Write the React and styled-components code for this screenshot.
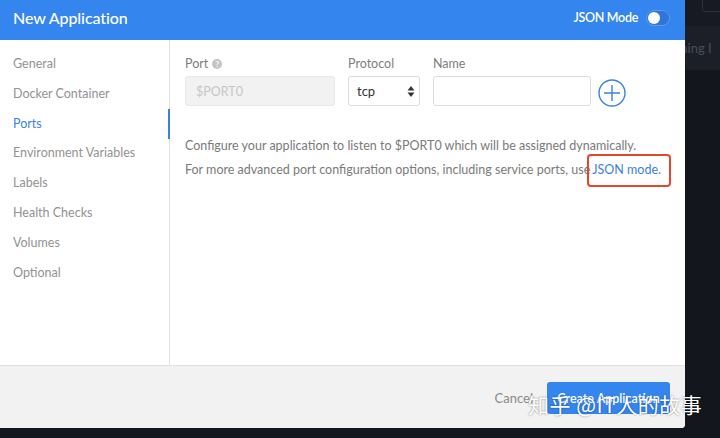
import React from 'react';
import styled, { createGlobalStyle } from 'styled-components';

const GlobalStyle = createGlobalStyle`
  html, body { margin: 0; padding: 0; }
  body {
    width: 720px;
    height: 438px;
    overflow: hidden;
    background: #13161d;
    font-family: Lato, "Noto Sans", sans-serif;
  }
`;

const navItems = [
  'General',
  'Docker Container',
  'Ports',
  'Environment Variables',
  'Labels',
  'Health Checks',
  'Volumes',
  'Optional',
];

const App = () => {
  return (
    <>
      <GlobalStyle />
      <Screen>
        <Modal>
          <Header>
            <Title>New Application</Title>
            <ModeSwitch>
              JSON Mode
              <Toggle><Knob /></Toggle>
            </ModeSwitch>
          </Header>
          <Body>
            <Sidebar>
              {navItems.map((item) => (
                <NavItem key={item} active={item === 'Ports'}>{item}</NavItem>
              ))}
            </Sidebar>
            <Content>
              <FieldRow>
                <Field width="150px">
                  <Label>
                    Port
                    <HelpIcon>?</HelpIcon>
                  </Label>
                  <Input disabled value="$PORT0" readOnly />
                </Field>
                <Field width="72px">
                  <Label>Protocol</Label>
                  <SelectBox>
                    tcp
                    <svg width="8" height="13" viewBox="0 0 8 13">
                      <path d="M4 1 L7.5 5.5 H0.5 Z" fill="#333" />
                      <path d="M4 12 L7.5 7.5 H0.5 Z" fill="#333" />
                    </svg>
                  </SelectBox>
                </Field>
                <Field width="158px">
                  <Label>Name</Label>
                  <Input />
                </Field>
                <AddButton>
                  <svg width="28" height="28" viewBox="0 0 28 28">
                    <circle cx="14" cy="14" r="13" fill="none" stroke="#3a82e0" strokeWidth="1.4" />
                    <path d="M14 6 V22 M6 14 H22" stroke="#3a82e0" strokeWidth="1.4" />
                  </svg>
                </AddButton>
              </FieldRow>
              <Help>
                <p>Configure your application to listen to $PORT0 which will be assigned dynamically.</p>
                <p>
                  For more advanced port configuration options, including service ports, use
                  <Highlight><Link>JSON mode.</Link></Highlight>
                </p>
              </Help>
            </Content>
          </Body>
          <Footer>
            <CancelButton>Cancel</CancelButton>
            <PrimaryButton>Create Application</PrimaryButton>
          </Footer>
        </Modal>
        <Backdrop>
          <TopStrip><GhostBox /></TopStrip>
          <InfoStrip>nning I</InfoStrip>
        </Backdrop>
        <Watermark>知乎 @IT人的故事</Watermark>
      </Screen>
    </>
  );
};

export default App;

const Screen = styled.div`
  position: relative;
  display: flex;
  width: 720px;
  height: 438px;
  overflow: hidden;
`;

const Modal = styled.div`
  width: 685px;
  height: 428px;
  flex-shrink: 0;
  display: flex;
  flex-direction: column;
  background: #fff;
  border-bottom-right-radius: 4px;
  overflow: hidden;
  z-index: 1;
`;

const Header = styled.div`
  height: 40px;
  flex-shrink: 0;
  box-sizing: border-box;
  background: #3585ef;
  display: flex;
  align-items: center;
  justify-content: space-between;
  padding: 0 15px 5px 13px;
  color: #fff;
`;

const Title = styled.div`
  font-size: 16px;
  font-weight: 500;
  letter-spacing: -0.1px;
`;

const ModeSwitch = styled.div`
  display: flex;
  align-items: center;
  gap: 8px;
  font-size: 12.5px;
  font-weight: 600;
  letter-spacing: -0.3px;
`;

const Toggle = styled.div`
  width: 20px;
  height: 14px;
  border-radius: 8px;
  background: #2f76d8;
  border: 1px solid #5a9bf1;
  display: flex;
  align-items: center;
  padding: 0 1px;
`;

const Knob = styled.div`
  width: 12px;
  height: 12px;
  border-radius: 50%;
  background: #fff;
`;

const Body = styled.div`
  flex: 1;
  display: flex;
  min-height: 0;
`;

const Sidebar = styled.div`
  width: 170px;
  flex-shrink: 0;
  border-right: 1px solid #e1e1e1;
  padding-top: 13px;
  box-sizing: border-box;
`;

const NavItem = styled.div`
  position: relative;
  height: 29.8px;
  line-height: 22px;
  padding-left: 13px;
  font-size: 12.5px;
  color: ${(p) => (p.active ? '#3a82e0' : '#929292')};

  &::after {
    content: '';
    display: ${(p) => (p.active ? 'block' : 'none')};
    position: absolute;
    right: -1px;
    top: -4px;
    width: 2px;
    height: 30px;
    background: #3a82e0;
  }
`;

const Content = styled.div`
  flex: 1;
  padding: 16px 15px 0 15px;
`;

const FieldRow = styled.div`
  display: flex;
  align-items: flex-end;
  gap: 13px;
`;

const Field = styled.div`
  width: ${(p) => p.width};
  display: flex;
  flex-direction: column;
  gap: 5px;
`;

const Label = styled.div`
  display: flex;
  align-items: center;
  gap: 4px;
  font-size: 12.5px;
  color: #7d7d7d;
  height: 15px;
`;

const HelpIcon = styled.span`
  width: 10px;
  height: 10px;
  border-radius: 50%;
  background: #c4c4c4;
  color: #fff;
  font-size: 8px;
  font-weight: 700;
  display: inline-flex;
  align-items: center;
  justify-content: center;
`;

const Input = styled.input`
  box-sizing: border-box;
  width: 100%;
  height: 30px;
  border: 1px solid #dcdcdc;
  border-radius: 3px;
  background: #fff;
  padding: 0 10px;
  font-family: inherit;
  font-size: 12.5px;
  color: #333;
  outline: none;

  &:disabled {
    background: #f2f2f2;
    border-color: #e8e8e8;
    color: #c6c6c6;
  }
`;

const SelectBox = styled.div`
  box-sizing: border-box;
  height: 30px;
  border: 1px solid #dcdcdc;
  border-radius: 3px;
  display: flex;
  align-items: center;
  justify-content: space-between;
  padding: 0 4px 0 8px;
  font-size: 13px;
  color: #333;
`;

const AddButton = styled.div`
  display: flex;
  align-items: center;
  margin-left: -6px;
  height: 30px;
  transform: translateY(2px);
`;

const Help = styled.div`
  margin-top: 28px;
  font-size: 12.5px;
  color: #7a7a7a;

  & > p {
    margin: 0;
    line-height: 24px;
    white-space: nowrap;
  }
`;

const Highlight = styled.span`
  position: relative;
  display: inline-block;

  &::before {
    content: '';
    position: absolute;
    left: -3px;
    right: -10px;
    top: -4px;
    bottom: -5px;
    border: 2px solid #e5462a;
    border-radius: 4px;
  }
`;

const Link = styled.span`
  color: #3a82e0;
  margin-left: 2px;
`;

const Footer = styled.div`
  height: 62px;
  flex-shrink: 0;
  background: #f2f2f2;
  border-top: 1px solid #e3e3e3;
  display: flex;
  align-items: center;
  justify-content: flex-end;
  gap: 14px;
  padding: 0 15px;
`;

const CancelButton = styled.div`
  font-size: 13px;
  color: #8a8a8a;
  margin-top: 2px;
`;

const PrimaryButton = styled.div`
  height: 32px;
  width: 123px;
  margin-top: 2px;
  border-radius: 3px;
  background: #3585ef;
  color: #fff;
  font-size: 12.5px;
  font-weight: 600;
  display: flex;
  align-items: center;
  justify-content: center;
`;

const Backdrop = styled.div`
  flex: 1;
  display: flex;
  flex-direction: column;
`;

const TopStrip = styled.div`
  height: 26px;
  background: #171a22;
  position: relative;
`;

const GhostBox = styled.div`
  position: absolute;
  left: 17px;
  top: -4px;
  width: 40px;
  height: 14px;
  border: 1px solid #2c3039;
  border-radius: 3px;
`;

const InfoStrip = styled.div`
  height: 44px;
  background: #1c1f27;
  color: #4a4e57;
  font-size: 13px;
  line-height: 44px;
  white-space: nowrap;
  margin-left: -12px;
  overflow: hidden;
`;

const Watermark = styled.div`
  position: absolute;
  left: 528px;
  top: 389px;
  z-index: 2;
  font-family: "Noto Sans CJK SC", sans-serif;
  font-size: 21px;
  color: #fff;
  letter-spacing: 0.5px;
  text-shadow: 0 0 2px rgba(0, 0, 0, 0.5);
  white-space: nowrap;
`;
